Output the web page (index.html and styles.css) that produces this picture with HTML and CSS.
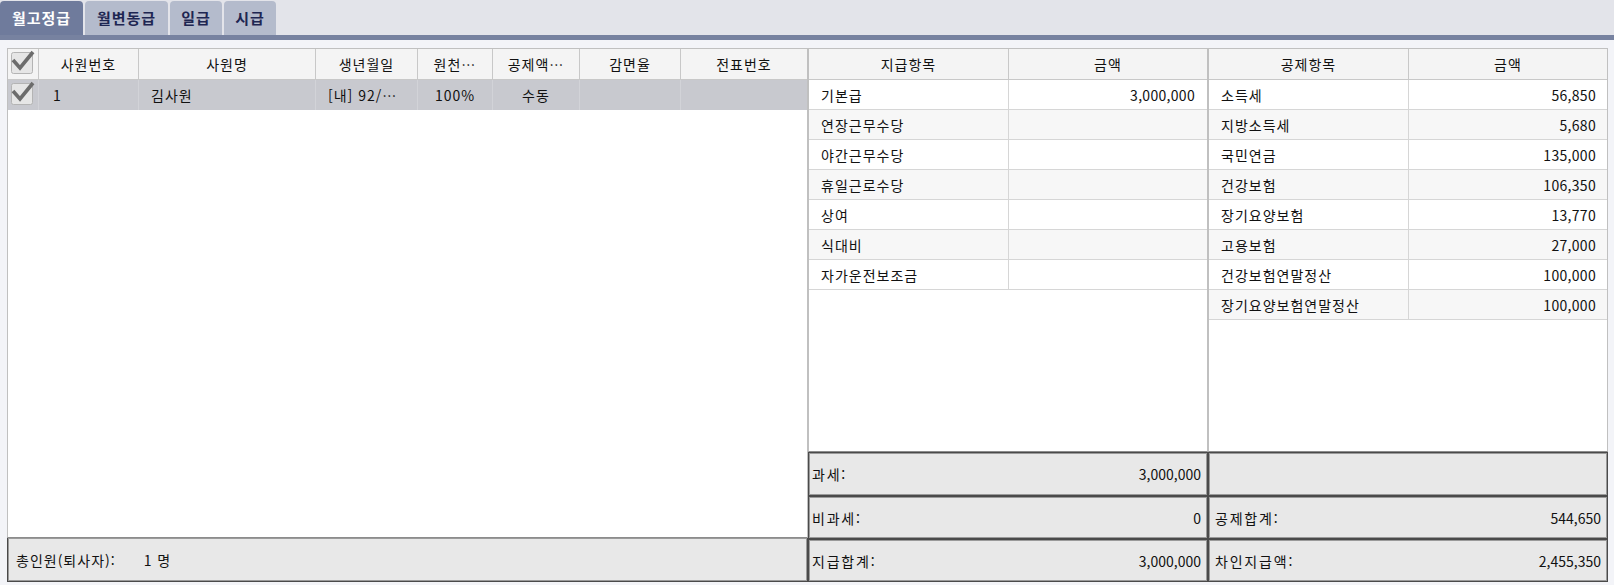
FILE: index.html
```html
<!DOCTYPE html>
<html lang="ko">

<head>
  <meta charset="UTF-8">
  <title>월고정급</title>
  <link rel="stylesheet" href="styles.css">
</head>

<body>
  <div class="tab-bar">
    <div class="tab active">월고정급</div>
    <div class="tab">월변동급</div>
    <div class="tab short">일급</div>
    <div class="tab short">시급</div>
  </div>
  <div class="tab-line"></div>

  <div class="panels">
    <!-- 사원 목록 -->
    <section class="panel">
      <div class="grid">
        <div class="emp-row head">
          <div class="cell chk">
            <svg width="25" height="27" viewBox="0 0 25 27"><rect x="1.5" y="3.5" width="21" height="21" rx="2" fill="#e6e6e6" stroke="#b4b4b4"/><polyline points="3,11 10,19 23,3" fill="none" stroke="#6c6c6c" stroke-width="3.6"/></svg>
          </div>
          <div class="cell">사원번호</div>
          <div class="cell">사원명</div>
          <div class="cell">생년월일</div>
          <div class="cell">원천…</div>
          <div class="cell">공제액…</div>
          <div class="cell">감면율</div>
          <div class="cell">전표번호</div>
        </div>
        <div class="emp-row selected">
          <div class="cell chk">
            <svg width="25" height="27" viewBox="0 0 25 27"><rect x="1.5" y="3.5" width="21" height="21" rx="2" fill="#e6e6e6" stroke="#b4b4b4"/><polyline points="3,11 10,19 23,3" fill="none" stroke="#6c6c6c" stroke-width="3.6"/></svg>
          </div>
          <div class="cell left no">1</div>
          <div class="cell left">김사원</div>
          <div class="cell left">[내] 92/…</div>
          <div class="cell">100%</div>
          <div class="cell">수동</div>
          <div class="cell"></div>
          <div class="cell"></div>
        </div>
      </div>
      <div class="sum-box emp-sum">
        <span class="label">총인원(퇴사자):</span>
        <span class="count">1 명</span>
      </div>
    </section>

    <!-- 지급항목 -->
    <section class="panel">
      <div class="grid">
        <div class="item-row head">
          <div class="cell">지급항목</div>
          <div class="cell">금액</div>
        </div>
        <div class="item-row"><div class="cell left">기본급</div><div class="cell right">3,000,000</div></div>
        <div class="item-row"><div class="cell left">연장근무수당</div><div class="cell right"></div></div>
        <div class="item-row"><div class="cell left">야간근무수당</div><div class="cell right"></div></div>
        <div class="item-row"><div class="cell left">휴일근로수당</div><div class="cell right"></div></div>
        <div class="item-row"><div class="cell left">상여</div><div class="cell right"></div></div>
        <div class="item-row"><div class="cell left">식대비</div><div class="cell right"></div></div>
        <div class="item-row"><div class="cell left">자가운전보조금</div><div class="cell right"></div></div>
      </div>
      <div class="sum-box"><span class="label">과세:</span><span>3,000,000</span></div>
      <div class="sum-box"><span class="label">비과세:</span><span>0</span></div>
      <div class="sum-box"><span class="label">지급합계:</span><span>3,000,000</span></div>
    </section>

    <!-- 공제항목 -->
    <section class="panel ded">
      <div class="grid">
        <div class="item-row head">
          <div class="cell">공제항목</div>
          <div class="cell">금액</div>
        </div>
        <div class="item-row"><div class="cell left">소득세</div><div class="cell right">56,850</div></div>
        <div class="item-row"><div class="cell left">지방소득세</div><div class="cell right">5,680</div></div>
        <div class="item-row"><div class="cell left">국민연금</div><div class="cell right">135,000</div></div>
        <div class="item-row"><div class="cell left">건강보험</div><div class="cell right">106,350</div></div>
        <div class="item-row"><div class="cell left">장기요양보험</div><div class="cell right">13,770</div></div>
        <div class="item-row"><div class="cell left">고용보험</div><div class="cell right">27,000</div></div>
        <div class="item-row"><div class="cell left">건강보험연말정산</div><div class="cell right">100,000</div></div>
        <div class="item-row"><div class="cell left">장기요양보험연말정산</div><div class="cell right">100,000</div></div>
      </div>
      <div class="sum-box"></div>
      <div class="sum-box"><span class="label">공제합계:</span><span>544,650</span></div>
      <div class="sum-box"><span class="label">차인지급액:</span><span>2,455,350</span></div>
    </section>
  </div>
</body>

</html>
```

FILE: styles.css
```css
* {
  box-sizing: border-box;
}

body {
  margin: 0;
  background-color: #f3f4f8;
  font-family: "Noto Sans CJK KR", "Liberation Sans", sans-serif;
  font-size: 14px;
  color: #111;
}

.tab-bar {
  display: flex;
  align-items: flex-end;
  gap: 2px;
  height: 35px;
  background-color: #e3e4ea;
}

.tab {
  width: 83px;
  height: 34px;
  border-radius: 4px 4px 0 0;
  background-color: #b4bbcc;
  color: #1e2652;
  font-weight: bold;
  font-size: 15px;
  line-height: 33px;
  text-align: center;
  letter-spacing: 1px;
}

.tab.short {
  width: 52px;
}

.tab.active {
  background-color: #6f7b9c;
  color: #fff;
}

.tab-line {
  height: 5px;
  background-color: #7782a0;
}

.panels {
  display: grid;
  grid-template-columns: 801px 400px 400px;
  height: 534px;
  margin: 8px 0 0 7px;
}

.panel {
  display: flex;
  flex-direction: column;
  min-height: 0;
}

.grid {
  flex: 1;
  background-color: #fff;
  border: 1px solid #c0c0c0;
  border-bottom-color: #8c8c8c;
}

.cell {
  display: flex;
  align-items: center;
  justify-content: center;
  border-right: 1px solid #d6d6d6;
  white-space: nowrap;
  overflow: hidden;
  letter-spacing: 1px;
}

.cell:last-child {
  border-right: none;
}

.cell.left {
  justify-content: flex-start;
  padding-left: 12px;
}

.cell.right {
  justify-content: flex-end;
  padding-right: 12px;
  letter-spacing: 0.3px;
}

.head {
  height: 31px;
  background-color: #f4f4f4;
  border-bottom: 1px solid #c8c8c8;
}

.head .cell {
  border-right-color: #c8c8c8;
}

/* 사원 목록 */
.emp-row {
  display: grid;
  grid-template-columns: 31px 100px 177px 102px 75px 87px 101px 126px;
  height: 30px;
}

.emp-row.head {
  height: 31px;
}

.emp-row.selected {
  background-color: #c8c9cf;
}

.emp-row.selected .cell {
  border-right-color: #d2d3d8;
}

.cell.chk {
  justify-content: flex-start;
  padding-left: 2px;
}

.cell.chk svg {
  display: block;
  margin-top: -3px;
}

.cell.no {
  padding-left: 14px;
}

/* 지급 / 공제 항목 */
.item-row {
  display: grid;
  grid-template-columns: 200px 1fr;
  height: 30px;
  border-bottom: 1px solid #d6d6d6;
}

.item-row.head {
  height: 31px;
  border-bottom-color: #c8c8c8;
}

.item-row:nth-child(odd):not(.head) {
  background-color: #f7f7f7;
}

.ded .cell.right {
  padding-right: 11px;
}

/* 합계 박스 */
.sum-box {
  display: flex;
  align-items: center;
  justify-content: space-between;
  height: 43px;
  padding: 0 6px 0 3px;
  background-color: #e8e8e8;
  border: 1px solid #4a4a4a;
  box-shadow: inset 0 0 0 1px #9a9a9a;
}

.sum-box:nth-child(2) {
  height: 44px;
}

.ded .sum-box {
  padding-left: 6px;
}

.sum-box .label {
  letter-spacing: 1.8px;
}

.emp-sum {
  height: 45px;
  justify-content: flex-start;
  padding-left: 8px;
  border-top: none;
}

.emp-sum .label {
  letter-spacing: 1px;
}

.emp-sum .count {
  margin-left: 28px;
  letter-spacing: 1px;
}
```
